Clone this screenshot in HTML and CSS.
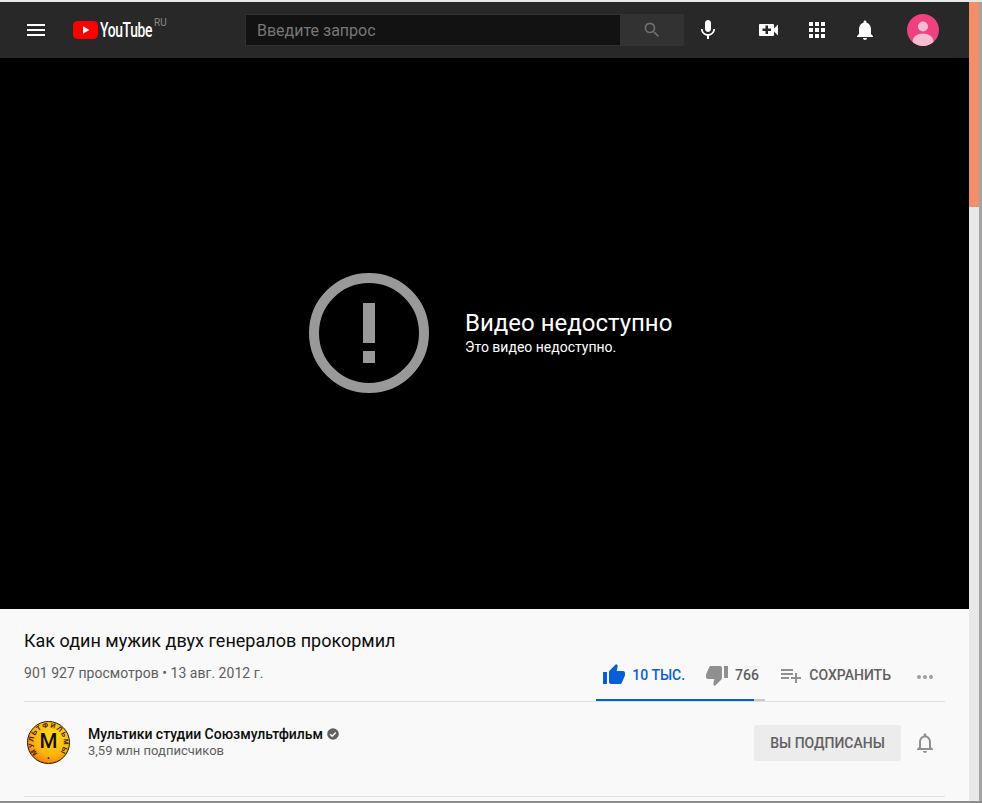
FILE: index.html
```html
<!DOCTYPE html>
<html lang="ru">
<head>
    <meta charset="UTF-8">
    <meta name="viewport" content="width=device-width, initial-scale=1.0">
    <title>Как один мужик двух генералов прокормил</title>
    <link rel="stylesheet" href="styles.css">
</head>
<body>
    <div class="window">
        <div class="page">
            <header class="masthead">
                <svg class="menu-icon" viewBox="0 0 18 12"><path fill="#fff" d="M0 0h18v2H0zM0 5h18v2H0zM0 10h18v2H0z"/></svg>
                <div class="logo">
                    <svg class="logo-icon" viewBox="0 0 25 18"><rect width="25" height="18" rx="4.5" fill="#f00"/><path fill="#fff" d="M10 5.2l6.4 3.8-6.4 3.8z"/></svg>
                    <span class="logo-text">YouTube</span>
                    <span class="logo-country">RU</span>
                </div>
                <div class="search">
                    <div class="search-input">Введите запрос</div>
                    <div class="search-button">
                        <svg width="20" height="20" viewBox="0 0 24 24"><path fill="#6e6e6e" d="M15.5 14h-.79l-.28-.27A6.47 6.47 0 0 0 16 9.5 6.5 6.5 0 1 0 9.5 16c1.61 0 3.09-.59 4.23-1.57l.27.28v.79l5 4.99L20.49 19l-4.99-5zm-6 0C7.01 14 5 11.99 5 9.5S7.01 5 9.5 5 14 7.01 14 9.5 11.99 14 9.5 14z"/></svg>
                    </div>
                </div>
                <svg class="mic-icon" width="24" height="24" viewBox="0 0 24 24"><path fill="#fff" d="M12 14c1.66 0 3-1.34 3-3V5c0-1.66-1.34-3-3-3S9 3.34 9 5v6c0 1.66 1.34 3 3 3zm5.3-3c0 3-2.54 5.1-5.3 5.1S6.7 14 6.7 11H5c0 3.41 2.72 6.23 6 6.72V21h2v-3.28c3.28-.48 6-3.3 6-6.72h-1.7z"/></svg>
                <div class="masthead-icons">
                    <svg width="24" height="24" viewBox="0 0 24 24"><path fill="#fff" d="M17 10.5V7c0-.55-.45-1-1-1H3c-.55 0-1 .45-1 1v10c0 .55.45 1 1 1h13c.55 0 1-.45 1-1v-3.5l4 4v-11l-4 4zM14 13h-3v3H8.5v-3h-3v-2.5h3v-3H11v3h3V13z"/></svg>
                    <svg width="24" height="24" viewBox="0 0 24 24"><path fill="#fff" d="M4 4h4v4H4zM10 4h4v4h-4zM16 4h4v4h-4zM4 10h4v4H4zM10 10h4v4h-4zM16 10h4v4h-4zM4 16h4v4H4zM10 16h4v4h-4zM16 16h4v4h-4z"/></svg>
                    <svg width="24" height="24" viewBox="0 0 24 24"><path fill="#fff" d="M12 22c1.1 0 2-.9 2-2h-4c0 1.1.9 2 2 2zm6-6v-5c0-3.07-1.63-5.64-4.5-6.32V4c0-.83-.67-1.5-1.5-1.5s-1.5.67-1.5 1.5v.68C7.64 5.36 6 7.92 6 11v5l-2 2v1h16v-1l-2-2z"/></svg>
                </div>
                <svg class="avatar" viewBox="0 0 32 32"><defs><clipPath id="avatar-clip"><circle cx="16" cy="16" r="16"/></clipPath></defs><g clip-path="url(#avatar-clip)"><rect width="32" height="32" fill="#ef4081"/><circle cx="16" cy="12.5" r="5" fill="#f8bbd0"/><ellipse cx="16" cy="27" rx="10.5" ry="7.5" fill="#f8bbd0"/></g></svg>
            </header>

            <div class="player">
                <svg class="error-icon" viewBox="0 0 120 120">
                    <circle cx="60" cy="60" r="55" fill="none" stroke="#999" stroke-width="10"/>
                    <path fill="#999" d="M54 30h12v40H54zM54 78h12v12H54z"/>
                </svg>
                <div class="error-text">
                    <div class="error-title">Видео недоступно</div>
                    <div class="error-sub">Это видео недоступно.</div>
                </div>
            </div>

            <main class="info">
                <h1 class="video-title">Как один мужик двух генералов прокормил</h1>
                <div class="stats-row">
                    <div class="views">901 927 просмотров • 13 авг. 2012 г.</div>
                    <div class="actions">
                        <div class="sentiment">
                            <div class="action liked">
                                <svg width="24" height="24" viewBox="0 0 24 24"><path fill="#065fd4" d="M1 21h4V9H1v12zm22-11c0-1.1-.9-2-2-2h-6.31l.95-4.57.03-.32c0-.41-.17-.79-.44-1.06L14.17 1 7.59 7.59C7.22 7.95 7 8.45 7 9v10c0 1.1.9 2 2 2h9c.83 0 1.54-.5 1.84-1.22l3.02-7.05c.09-.23.14-.47.14-.73v-2z"/></svg>
                                <span>10 ТЫС.</span>
                            </div>
                            <div class="action disliked">
                                <svg width="24" height="24" viewBox="0 0 24 24"><path fill="#909090" d="M15 3H6c-.83 0-1.54.5-1.84 1.22l-3.02 7.05c-.09.23-.14.47-.14.73v2c0 1.1.9 2 2 2h6.31l-.95 4.57-.03.32c0 .41.17.79.44 1.06L9.83 23l6.59-6.59c.36-.36.58-.86.58-1.41V5c0-1.1-.9-2-2-2zm4 0v12h4V3h-4z"/></svg>
                                <span>766</span>
                            </div>
                            <div class="sentiment-bar"><div class="sentiment-fill"></div></div>
                        </div>
                        <div class="action save">
                            <svg width="24" height="24" viewBox="0 0 24 24"><path fill="#909090" d="M14 10H2v2h12v-2zm0-4H2v2h12V6zm4 8v-4h-2v4h-4v2h4v4h2v-4h4v-2h-4zM2 16h8v-2H2v2z"/></svg>
                            <span>СОХРАНИТЬ</span>
                        </div>
                        <svg class="more-icon" width="24" height="24" viewBox="0 0 24 24"><path fill="#a0a0a0" d="M6 12a2 2 0 1 0 0 4 2 2 0 0 0 0-4zm6 0a2 2 0 1 0 0 4 2 2 0 0 0 0-4zm6 0a2 2 0 1 0 0 4 2 2 0 0 0 0-4z"/></svg>
                    </div>
                </div>
                <div class="channel-row">
                    <svg class="channel-avatar" viewBox="0 0 44 44">
                        <defs>
                            <radialGradient id="coin" cx="0.6" cy="0.35" r="0.75"><stop offset="0" stop-color="#ffdc20"/><stop offset="0.6" stop-color="#fdb50e"/><stop offset="1" stop-color="#f26a05"/></radialGradient>
                            <path id="ring" d="M11.04 32.96A15.5 15.5 0 1 1 32.96 32.96"/>
                        </defs>
                        <circle cx="22" cy="22" r="21.5" fill="url(#coin)" stroke="#1c1200" stroke-width="1"/>
                        <text class="coin-ring"><textPath href="#ring" textLength="71">МУЛЬТФИЛЬМЫ</textPath></text>
                        <text class="coin-letter" x="22" y="28" text-anchor="middle">М</text>
                        <circle cx="22" cy="38" r="0.9" fill="#222"/>
                    </svg>
                    <div class="channel-text">
                        <div class="channel-name">
                            <span>Мультики студии Союзмультфильм</span>
                            <svg width="14" height="14" viewBox="0 0 14 14"><circle cx="7" cy="7" r="5.8" fill="#606060"/><path fill="none" stroke="#f9f9f9" stroke-width="1.5" d="M4.2 7.2l2 2 3.6-3.8"/></svg>
                        </div>
                        <div class="channel-subs">3,59 млн подписчиков</div>
                    </div>
                    <div class="subscribed">ВЫ ПОДПИСАНЫ</div>
                    <svg class="channel-bell" width="24" height="24" viewBox="0 0 24 24"><path fill="#909090" d="M12 22c1.1 0 2-.9 2-2h-4c0 1.1.9 2 2 2zm6-6v-5c0-3.07-1.64-5.64-4.5-6.32V4c0-.83-.67-1.5-1.5-1.5s-1.5.67-1.5 1.5v.68C7.63 5.36 6 7.92 6 11v5l-2 2v1h16v-1l-2-2zm-2 1H8v-6c0-2.48 1.51-4.5 4-4.5s4 2.02 4 4.5v6z"/></svg>
                </div>
            </main>
        </div>
        <div class="scrollbar"><div class="scrollbar-thumb"></div></div>
        <div class="window-edge"></div>
    </div>
</body>
</html>
```

FILE: styles.css
```css
html, body {
    margin: 0;
    height: 803px;
    overflow: hidden;
}
body {
    font-family: Roboto, "Noto Sans", sans-serif;
    background-color: #8c8c8c;
}
.window {
    display: flex;
    width: 982px;
    height: 799px;
    border-top: 2px solid #e8e8e8;
}
.page {
    flex: 0 0 969px;
    display: flex;
    flex-direction: column;
    background-color: #f9f9f9;
}
.masthead {
    flex: 0 0 56px;
    display: flex;
    align-items: center;
    background-color: #282828;
}
.menu-icon {
    width: 18px;
    height: 12px;
    margin-left: 27px;
}
.logo {
    display: flex;
    align-items: center;
    margin-left: 28px;
    width: 172px;
    position: relative;
}
.logo-icon {
    width: 25px;
    height: 18px;
}
.logo-text {
    display: inline-block;
    margin-left: 2px;
    color: #fff;
    font-size: 21px;
    font-weight: 500;
    letter-spacing: -0.5px;
    transform: scaleX(0.66);
    transform-origin: left center;
}
.logo-country {
    position: absolute;
    left: 81px;
    top: -1px;
    color: #888;
    font-size: 10px;
}
.search {
    display: flex;
    height: 32px;
    width: 439px;
}
.search-input {
    flex: 1;
    box-sizing: border-box;
    padding-left: 11px;
    background-color: #121212;
    border: 1px solid #303030;
    border-right: none;
    color: #777;
    font-size: 16px;
    line-height: 31px;
}
.search-button {
    flex: 0 0 64px;
    display: flex;
    align-items: center;
    justify-content: center;
    background-color: #323232;
}
.mic-icon {
    margin-left: 12px;
}
.masthead-icons {
    display: flex;
    gap: 24px;
    margin-left: 37px;
}
.avatar {
    width: 32px;
    height: 32px;
    margin-left: 30px;
}
.player {
    flex: 0 0 551px;
    display: flex;
    align-items: center;
    padding: 0 0 2px 309px;
    box-sizing: border-box;
    background-color: #000;
}
.error-icon {
    width: 120px;
    height: 120px;
}
.error-text {
    margin: 0 0 3px 36px;
    color: #fff;
}
.error-title {
    font-size: 24px;
    line-height: 30px;
}
.error-sub {
    margin-top: 1px;
    font-size: 14px;
    line-height: 16px;
}
.info {
    flex: 1;
    margin: 0 24px;
    min-width: 0;
}
.video-title {
    margin: 20px 0 0;
    font-size: 18px;
    font-weight: 400;
    line-height: 24px;
    color: #0d0d0d;
}
.stats-row {
    display: flex;
    justify-content: space-between;
    height: 48px;
    border-bottom: 1px solid #e0e0e0;
}
.views {
    margin-top: 10px;
    font-size: 14px;
    line-height: 20px;
    letter-spacing: 0.03px;
    color: #606060;
}
.actions {
    display: flex;
    align-items: flex-start;
}
.sentiment {
    position: relative;
    display: flex;
    width: 169px;
    height: 48px;
}
.sentiment-bar {
    position: absolute;
    left: 0;
    right: 0;
    bottom: 0;
    height: 2px;
    background-color: #ccc;
}
.sentiment-fill {
    width: 158px;
    height: 2px;
    background-color: #065fd4;
}
.action {
    display: flex;
    align-items: center;
    height: 24px;
    margin-top: 10px;
    font-size: 14px;
    font-weight: 500;
    color: #606060;
}
.action span {
    margin-left: 6px;
}
.liked {
    margin-left: 6px;
    color: #065fd4;
}
.disliked {
    margin-left: 20px;
}
.save {
    margin-left: 14px;
}
.more-icon {
    margin: 10px 8px 0 22px;
}
.channel-row {
    display: flex;
    align-items: flex-start;
    height: 94px;
    border-bottom: 1px solid #e0e0e0;
}
.channel-avatar {
    width: 43px;
    height: 43px;
    margin: 19px 0 0 3px;
}
.coin-ring {
    font-family: "Liberation Sans", sans-serif;
    font-size: 7px;
    font-weight: 700;
    fill: #33200a;
}
.coin-letter {
    font-family: Roboto, sans-serif;
    font-size: 21px;
    font-weight: 500;
    fill: #15110a;
}
.channel-text {
    flex: 1;
    margin: 23px 0 0 18px;
}
.channel-name {
    display: flex;
    align-items: center;
    gap: 3px;
    font-size: 14px;
    font-weight: 500;
    line-height: 18px;
    letter-spacing: -0.02px;
    color: #0d0d0d;
}
.channel-subs {
    font-size: 13px;
    line-height: 16px;
    color: #606060;
}
.subscribed {
    margin-top: 23px;
    width: 147px;
    height: 36px;
    line-height: 36px;
    text-align: center;
    border-radius: 2px;
    background-color: #ececec;
    color: #606060;
    font-size: 14px;
    font-weight: 500;
}
.channel-bell {
    margin: 29px 8px 0 12px;
}
.scrollbar {
    flex: 0 0 10px;
    background-color: #e8e8e8;
}
.scrollbar-thumb {
    height: 205px;
    background-color: #f28f68;
}
.window-edge {
    flex: 0 0 3px;
    background-color: #a3a3a3;
}
```
